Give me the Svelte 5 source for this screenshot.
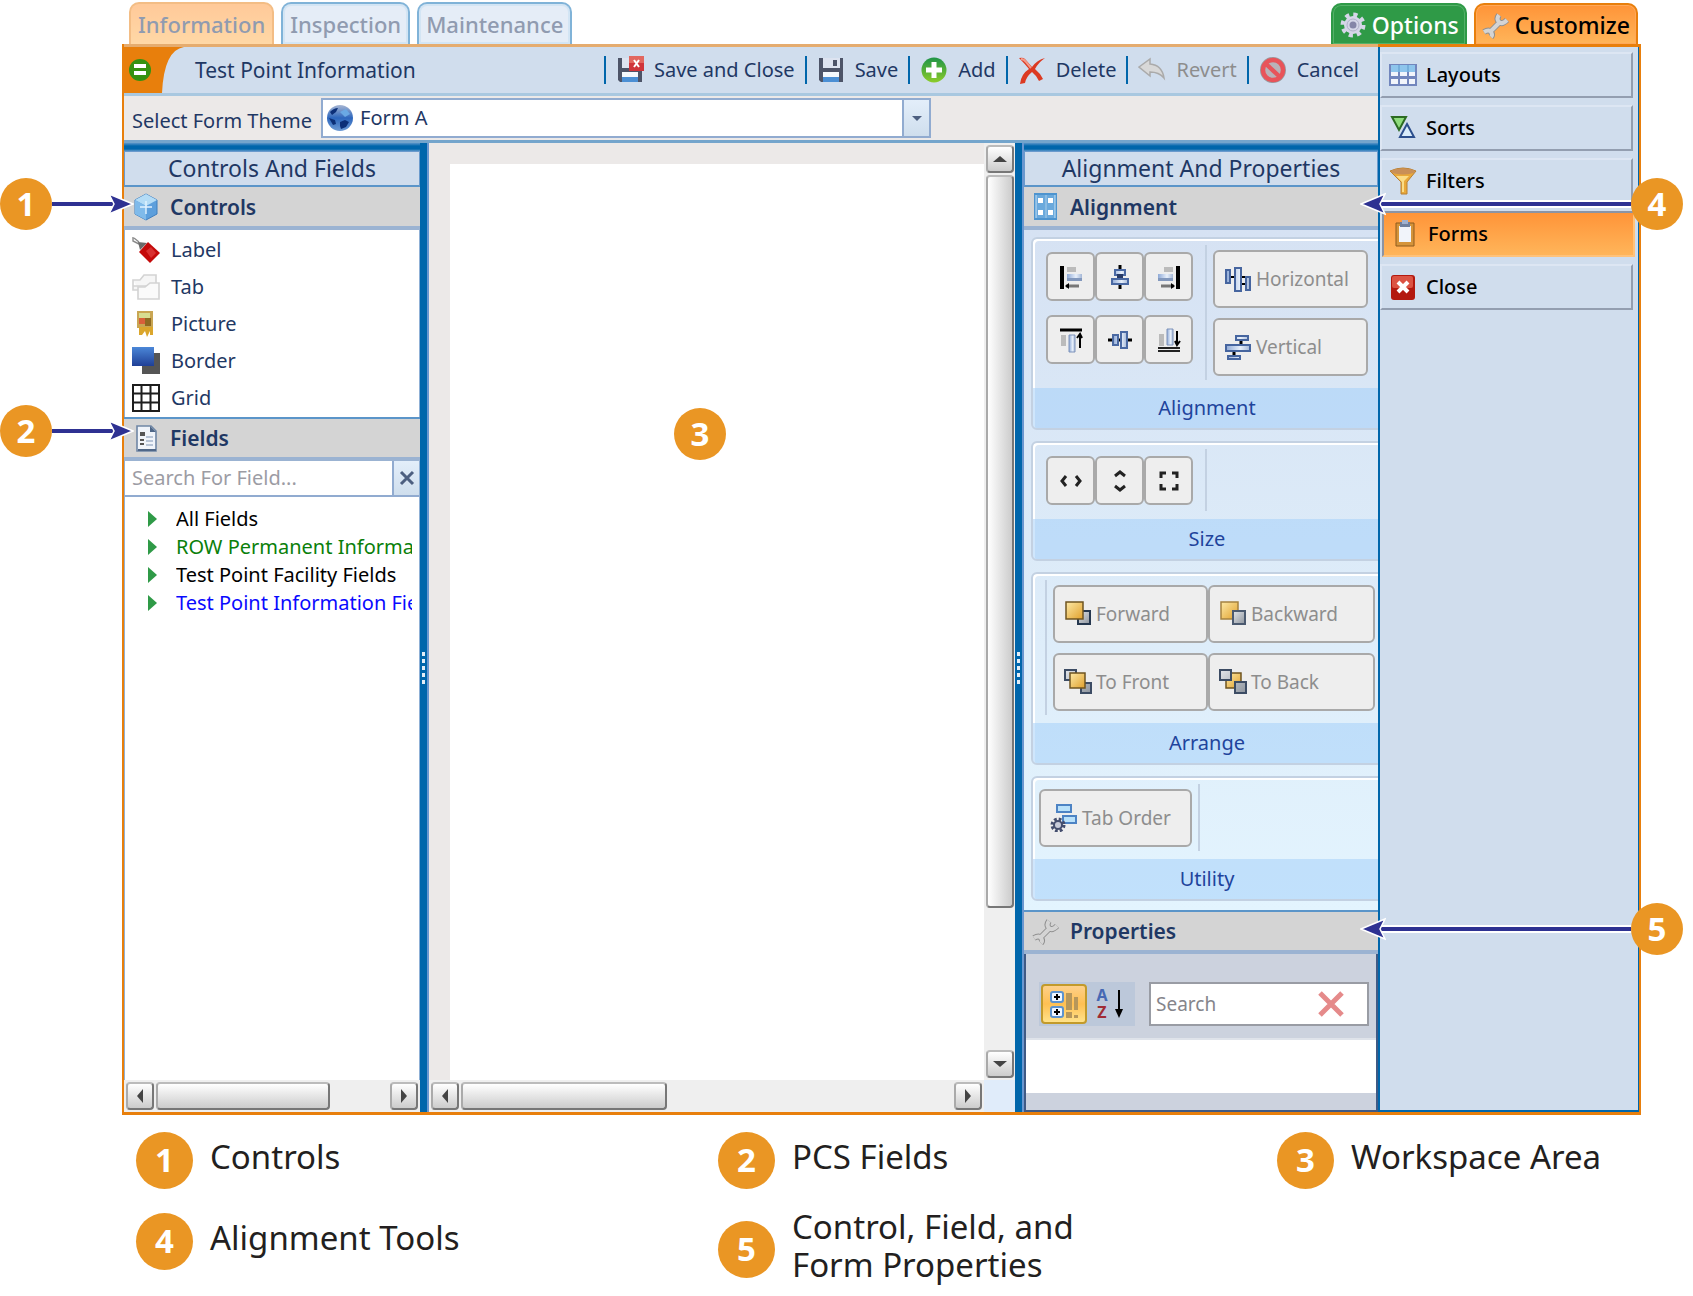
<script>
  const tabs = [
    { label: 'Information', active: true },
    { label: 'Inspection', active: false },
    { label: 'Maintenance', active: false },
  ];

  const actions = [
    { label: 'Save and Close', icon: 'save-close' },
    { label: 'Save', icon: 'save' },
    { label: 'Add', icon: 'add' },
    { label: 'Delete', icon: 'delete' },
    { label: 'Revert', icon: 'revert', disabled: true },
    { label: 'Cancel', icon: 'cancel' },
  ];

  const controls = [
    { label: 'Label', icon: 'label' },
    { label: 'Tab', icon: 'tab' },
    { label: 'Picture', icon: 'picture' },
    { label: 'Border', icon: 'border' },
    { label: 'Grid', icon: 'grid' },
  ];

  const fields = [
    { label: 'All Fields', color: '#000000' },
    { label: 'ROW Permanent Information', color: '#0a800a' },
    { label: 'Test Point Facility Fields', color: '#000000' },
    { label: 'Test Point Information Fields', color: '#0a0aff' },
  ];

  const alignButtons = [
    ['align-left', 'Align left'],
    ['align-center', 'Align center'],
    ['align-right', 'Align right'],
    ['align-top', 'Align top'],
    ['align-middle', 'Align middle'],
    ['align-bottom', 'Align bottom'],
  ];

  const sizeButtons = [
    ['same-width', 'Same width'],
    ['same-height', 'Same height'],
    ['same-size', 'Same size'],
  ];

  const menu = [
    { label: 'Layouts', icon: 'layouts' },
    { label: 'Sorts', icon: 'sorts' },
    { label: 'Filters', icon: 'filters' },
    { label: 'Forms', icon: 'forms' },
    { label: 'Close', icon: 'close' },
  ];

  const legend = [
    'Controls',
    'PCS Fields',
    'Workspace Area',
    'Alignment Tools',
    'Control, Field, and\nForm Properties',
  ];

  let selected = $state('Forms');
</script>

{#snippet icon(name)}
  <svg class="icon" viewBox="0 0 28 28" aria-hidden="true">
    {#if name === 'save' || name === 'save-close'}
      <path d="M2 2h24v24H4l-2-2z" fill="#4d5468" />
      <path d="M6 2h17v10H6z" fill="#dde3f0" />
      <path d="M16 4h4v6h-4z" fill="#4d5468" />
      <path d="M6 16h16v10H6z" fill="#f4f8fc" />
      <path d="M6 21h16v5H6z" fill="#4b8fd4" />
      {#if name === 'save-close'}
        <path d="M13 0h15v15H13z" fill="#d0343a" />
        <path d="M13 0h15v7H13z" fill="#e2675f" />
        <path d="M18 4l5 7M23 4l-5 7" stroke="#fff" stroke-width="2" />
      {/if}
    {:else if name === 'add'}
      <circle cx="14" cy="14" r="12.5" fill="url(#green)" />
      <path d="M14 6v16M6 14h16" stroke="#fff" stroke-width="5" />
    {:else if name === 'delete'}
      <path d="M1 2q4-1 6 1l7 8q5-7 13-9q-7 5-10 11q5 4 8 10l-4 2q-3-6-7-9q-6 5-7 11l-5 1q1-10 9-15q-4-5-10-11z" fill="#dc3a22" />
      <path d="M3 3q3 0 5 3l5 6" stroke="#f39a8a" stroke-width="2" fill="none" />
    {:else if name === 'revert'}
      <path d="M1 11L12 3v5q12 1 14 14q-5-6-14-6v4z" fill="#d8d8d8" stroke="#aaa" stroke-width="1.5" />
    {:else if name === 'cancel'}
      <circle cx="14" cy="14" r="13" fill="#9a9a9f" />
      <circle cx="14" cy="14" r="10" fill="#b9b2b8" stroke="#e8545a" stroke-width="4.4" />
      <path d="M7 8l14 13" stroke="#e8545a" stroke-width="4.4" />
    {:else if name === 'globe'}
      <circle cx="14" cy="14" r="13" fill="url(#globe)" />
      <path d="M4 8q4-4 8-4l-2 4-4 3zM14 18l5-2 4 2-3 5-5 2-1-3zM3 14l6 2 1 4-3 1z" fill="#0c2f78" />
      <path d="M14 8l6-3 4 5-5 3z" fill="#6aa9e4" />
    {:else if name === 'cube'}
      <path d="M14 1l11 6v14l-11 6-11-6V7z" fill="#5d9fdc" stroke="#3f7fbf" />
      <path d="M14 1l11 6-11 6L3 7z" fill="#b4dcf6" />
      <path d="M3 7l11 6v14L3 21z" fill="#7fbaea" />
      <path d="M14 8v13M8 14h12" stroke="#e3f4ff" stroke-width="1.4" />
    {:else if name === 'label'}
      <path d="M1 1v4l6 3M2 2l5 4" stroke="#8a8a8a" fill="none" stroke-width="1.4" />
      <path d="M6 6l9 1-7 7z" fill="#6b6b6b" />
      <path d="M16 6l12 11-10 10L7 16z" fill="#c40a0a" />
      <path d="M14 15l5-4 5 6-5 5z" fill="#d93030" />
    {:else if name === 'tab'}
      <path d="M1 7h7l4-5h12v11H1zM1 7v10h6" fill="#f6f6f6" stroke="#d3d3d3" stroke-width="1.6" />
      <path d="M6 14h7l5-4h9v16H6z" fill="#fafafa" stroke="#d3d3d3" stroke-width="1.6" />
    {:else if name === 'picture'}
      <path d="M5 1h16v17H5z" fill="#c9a653" />
      <path d="M7 3h11v6H7z" fill="#d7dd92" />
      <path d="M7 8h6v6H7z" fill="#d9603a" />
      <path d="M13 8h6v8h-6z" fill="#8f6a22" />
      <path d="M7 17h14v8h-3v-4l-3 6-2-6-3 4H7z" fill="#dba62c" />
    {:else if name === 'border'}
      <path d="M10 6h18v21H10z" fill="#555" />
      <path d="M0 0h22v19H0z" fill="url(#blue)" />
    {:else if name === 'grid'}
      <path d="M1 1h26v26H1zM9.500 1v26M18.500 1v26M1 9.500h26M1 18.500h26" fill="#fff" stroke="#1d1d1d" stroke-width="2" />
    {:else if name === 'document'}
      <path d="M5 2h14l5 5v20H5z" fill="#f0f4fa" stroke="#6f86a5" stroke-width="1.6" />
      <path d="M18 2v6h6zM6 25h18v2H6z" fill="#4f6788" />
      <path d="M8 8h5v4H8zM8 15h4v2H8zM8 19h4v2H8z" fill="#555" />
      <path d="M14 13h7M14 17h7M14 21h7" stroke="#a4b4cb" stroke-width="1.6" />
    {:else if name === 'align-grid'}
      <path d="M2 0h23v27H2z" fill="#4d94cf" />
      <path d="M4 2h9v23H4zM15 2h8v23h-8z" fill="#6aa9dc" />
      <path d="M6 5h5v5H6zM16 5h5v5h-5zM6 17h5v5H6zM16 17h5v5h-5z" fill="#fff" />
      <path d="M4 2v23M14 2v23M23 2v23" stroke="#c7e2f6" stroke-width="1" />
    {:else if name === 'wrench'}
      <g fill="none" stroke="#8f8f8f" stroke-width="6">
        <path d="M17 4q-3 4 0 7t8-2M2 21q5-3 7 0t0 5M9 20l9-9" />
      </g>
      <g fill="none" stroke="#d4d4d4" stroke-width="4">
        <path d="M17 4q-3 4 0 7t8-2M2 21q5-3 7 0t0 5M9 20l9-9" />
      </g>
    {:else if name === 'gear'}
      <circle cx="14" cy="14" r="10" fill="none" stroke="#d5d6e8" stroke-width="5" stroke-dasharray="4 3.850" />
      <circle cx="14" cy="14" r="9" fill="#d5d6e8" />
      <circle cx="14" cy="14" r="3.500" fill="#8585a8" />
      <circle cx="14" cy="14" r="6" fill="none" stroke="#b0b1ca" />
    {:else if name === 'layouts'}
      <path d="M0 3h28v22H0z" fill="#7286bd" />
      <path d="M2 4h24v7H2z" fill="#8ec5ec" />
      <path d="M2 11h7v4H2zM11 11h7v4h-7zM20 11h6v4h-6zM2 18h7v5H2zM11 18h7v5h-7zM20 18h6v5h-6z" fill="#f2f5fb" />
      <path d="M10 4v7M19 4v7" stroke="#6fa8d8" stroke-width="1.6" />
    {:else if name === 'sorts'}
      <path d="M3 3h14l-7 13z" fill="#8fdc7d" stroke="#2c6b22" stroke-width="2" />
      <path d="M18 10l7 13H11z" fill="#d9ecfb" stroke="#2c4f8d" stroke-width="2" />
    {:else if name === 'filters'}
      <path d="M1 4q13-6 26 0L18 15v12h-6V15z" fill="#e9a93a" stroke="#b98033" />
      <ellipse cx="14" cy="4.500" rx="12" ry="3" fill="#c98f57" />
      <path d="M7 9l6 6v10h2V14l5-5z" fill="#fbdc86" />
    {:else if name === 'forms'}
      <path d="M5 3h18v23H5z" fill="#d5943a" stroke="#8f5a1c" />
      <path d="M8 6h12v16H8z" fill="#f1f4fa" />
      <path d="M9 2h10v5H9z" fill="#6f7f9d" />
      <path d="M11 0h6v4h-6z" fill="#9fb0cf" />
    {:else if name === 'close'}
      <rect x="2" y="2" width="24" height="25" rx="3" fill="#b3190f" />
      <rect x="3" y="3" width="21" height="12" rx="2" fill="#dc5343" />
      <path d="M9 9l10 10M19 9L9 19" stroke="#fff" stroke-width="4" />
    {:else if name === 'align-left'}
      <path d="M3 3h4v23H3z" fill="#000" />
      <path d="M10 4h9v5h-9z" fill="#bbb" />
      <path d="M10 11h15v7H10z" fill="url(#steel)" />
      <path d="M10 15h15v3H10z" fill="#8298bd" />
      <path d="M9 23h13" stroke="#777" stroke-width="3" />
      <path d="M8 23l4-3v6z" fill="#000" />
    {:else if name === 'align-right'}
      <path d="M21 3h4v23h-4z" fill="#000" />
      <path d="M9 4h9v5H9z" fill="#bbb" />
      <path d="M3 11h15v7H3z" fill="url(#steel)" />
      <path d="M3 15h15v3H3z" fill="#8298bd" />
      <path d="M6 23h13" stroke="#777" stroke-width="3" />
      <path d="M20 23l-4-3v6z" fill="#000" />
    {:else if name === 'align-center'}
      <path d="M14 2v24" stroke="#000" stroke-width="3" />
      <path d="M9 7h10v5H9zM6 16h16v5H6z" fill="url(#steel)" stroke="#4a69a3" stroke-width="2" />
      <path d="M11 11h6v4h-6z" fill="#273a66" />
    {:else if name === 'align-top'}
      <path d="M3 4h22" stroke="#000" stroke-width="3" />
      <path d="M4 9h5v11H4z" fill="#bbb" />
      <path d="M12 9h6v17h-6z" fill="url(#steel)" stroke="#7d92ba" />
      <path d="M23 9v13M20 12l3-4 2 4" stroke="#000" stroke-width="2" fill="none" />
    {:else if name === 'align-middle'}
      <path d="M2 14h24" stroke="#000" stroke-width="3" />
      <path d="M7 9h5v10H7zM15 6h6v16h-6z" fill="url(#steel)" stroke="#4a69a3" stroke-width="2" />
    {:else if name === 'align-bottom'}
      <path d="M3 25h22M3 22h22" stroke="#222" stroke-width="2" />
      <path d="M4 8h5v12H4z" fill="#bbb" />
      <path d="M12 3h6v16h-6z" fill="url(#steel)" stroke="#7d92ba" />
      <path d="M22 5v14M20 15l2 4 3-4" stroke="#000" stroke-width="2" fill="none" />
    {:else if name === 'horizontal'}
      <path d="M4 12h20M17 19h8" stroke="#000" stroke-width="2" />
      <path d="M2 5h4v13H2zM11 3h6v23h-6zM22 12h4v13h-4z" fill="url(#steel)" stroke="#46659f" stroke-width="2" />
    {:else if name === 'vertical'}
      <path d="M17 6v8M10 16v8" stroke="#000" stroke-width="3" />
      <path d="M12 3h12v4H12zM2 12h24v6H2zM4 23h12v3H4z" fill="url(#steel)" stroke="#46659f" stroke-width="2" />
    {:else if name === 'same-width'}
      <path d="M9 9l-4 5 4 5M19 9l4 5-4 5" stroke="#222" stroke-width="3" fill="none" />
    {:else if name === 'same-height'}
      <path d="M9 9l5-4 5 4M9 19l5 4 5-4" stroke="#222" stroke-width="3" fill="none" />
    {:else if name === 'same-size'}
      <path d="M6 11V6h5M17 6h5v5M22 17v5h-5M11 22H6v-5" stroke="#222" stroke-width="3" fill="none" />
    {:else if name === 'forward'}
      <path d="M14 11h12v13H14z" fill="url(#silver)" stroke="#26384f" stroke-width="2" />
      <path d="M2 2h17v17H2z" fill="url(#gold)" stroke="#6f5420" stroke-width="1.500" />
    {:else if name === 'backward'}
      <path d="M2 2h17v17H2z" fill="url(#gold)" stroke="#a58240" stroke-width="1.500" />
      <path d="M14 11h12v13H14z" fill="url(#silver)" stroke="#4b5a70" stroke-width="2" />
    {:else if name === 'to-front'}
      <path d="M1 2h11v10H1zM17 15h10v10H17z" fill="url(#silver)" stroke="#3c4c64" stroke-width="2" />
      <path d="M6 5h15v15H6z" fill="url(#gold)" stroke="#6f5420" stroke-width="1.500" />
    {:else if name === 'to-back'}
      <path d="M7 5h15v15H7z" fill="url(#gold)" stroke="#6f5420" stroke-width="1.500" />
      <path d="M1 2h11v10H1zM16 14h11v11H16z" fill="url(#silver)" stroke="#3c4c64" stroke-width="2" />
    {:else if name === 'tab-order'}
      <path d="M7 1h14v7H7zM13 12h13v7H13z" fill="#b9e1fa" stroke="#4d83c4" stroke-width="2" />
      <circle cx="8" cy="21" r="5.500" fill="none" stroke="#444e6e" stroke-width="4" stroke-dasharray="2.500 1.820" />
      <circle cx="8" cy="21" r="4" fill="#c7cbd9" stroke="#444e6e" stroke-width="2" />
    {:else if name === 'categorized'}
      <rect x="1" y="2" width="12" height="10" rx="2" fill="#eef6ff" stroke="#5c93cf" stroke-width="2" />
      <rect x="1" y="17" width="12" height="10" rx="2" fill="#eef6ff" stroke="#5c93cf" stroke-width="2" />
      <path d="M7 4v6M4 7h6M7 19v6M4 22h6" stroke="#000" stroke-width="2" />
      <path d="M16 3h6v17h-6zM24 7h4v13h-4zM16 22h6v6h-6zM24 25h4v3h-4z" fill="#b7975a" />
    {/if}
  </svg>
{/snippet}

{#snippet arrow(dir)}
  <button class="scroll-button" aria-label={`Scroll ${dir}`}>
    <svg class="arrow-{dir}" width="14" height="14" viewBox="0 0 14 14" aria-hidden="true">
      <path d="M7 4l7 6H0z" fill="#444" />
    </svg>
  </button>
{/snippet}

{#snippet callout(n, side)}
  <span class="callout {side}">
    <span class="dot">{n}</span>
    <svg class="pointer" preserveAspectRatio="none" viewBox="0 0 10 24" aria-hidden="true">
      <path d="M0 12h10" stroke="#fff" stroke-width="8" />
      <path d="M0 12h10" stroke="#2e3192" stroke-width="4" />
    </svg>
    <svg class="head" width="26" height="24" viewBox="0 0 26 24" aria-hidden="true">
      <path d="M1 2l24 10L1 22l5-10z" fill="#2e3192" stroke="#fff" stroke-width="1.500" />
    </svg>
  </span>
{/snippet}

{#snippet splitter()}
  <div class="splitter">
    <span></span><span></span><span></span><span></span><span></span>
  </div>
{/snippet}

{#snippet ribbonButton(name, label)}
  <button class="ribbon-button" disabled>
    {@render icon(name)}
    <span>{label}</span>
  </button>
{/snippet}

<svg class="defs" aria-hidden="true">
  <defs>
    <linearGradient id="green" x2="0" y2="1">
      <stop offset="0" stop-color="#1f9447" /><stop offset="1" stop-color="#8ccc2a" />
    </linearGradient>
    <linearGradient id="globe" x2="0" y2="1">
      <stop offset="0" stop-color="#a7b6d3" /><stop offset=".5" stop-color="#2c66bd" /><stop offset="1" stop-color="#6d9ad4" />
    </linearGradient>
    <linearGradient id="blue" x2="0" y2="1">
      <stop offset="0" stop-color="#4b87d8" /><stop offset="1" stop-color="#1f3f96" />
    </linearGradient>
    <linearGradient id="steel">
      <stop offset="0" stop-color="#8ea9d6" /><stop offset=".6" stop-color="#e8f0fb" /><stop offset="1" stop-color="#a3b6d6" />
    </linearGradient>
    <linearGradient id="silver" x2="1" y2="1">
      <stop offset="0" stop-color="#e3e6ea" /><stop offset="1" stop-color="#8d949d" />
    </linearGradient>
    <linearGradient id="gold" x2="1" y2="1">
      <stop offset="0" stop-color="#fde9a6" /><stop offset="1" stop-color="#e0a02c" />
    </linearGradient>
  </defs>
</svg>

<main>
  <div class="screen">
    <nav class="tabs">
      {#each tabs as tab}
        <button class="tab" class:active={tab.active}>{tab.label}</button>
      {/each}
      <button class="tab options">{@render icon('gear')}Options</button>
      <button class="tab customize">{@render icon('wrench')}Customize</button>
    </nav>

    <div class="frame">
      <div class="content">
        <header class="toolbar">
          <svg class="corner" width="60" height="46" viewBox="0 0 60 46" aria-hidden="true">
            <path d="M0 0h60Q40 3 38 46H0z" fill="#e87f0c" />
            <circle cx="16" cy="23" r="11" fill="#35910f" />
            <path d="M10 19h12M10 26h12" stroke="#fff" stroke-width="4" />
          </svg>
          <h1>Test Point Information</h1>
          <div class="actions">
            {#each actions as action}
              <button class="action" disabled={action.disabled}>
                {@render icon(action.icon)}
                {action.label}
              </button>
            {/each}
          </div>
        </header>

        <div class="theme-row">
          <label for="theme">Select Form Theme</label>
          <div class="select-box">
            {@render icon('globe')}
            <select id="theme">
              <option>Form A</option>
            </select>
            <span class="select-arrow"></span>
          </div>
        </div>

        <div class="body">
          <section class="panel left">
            <h2>Controls And Fields</h2>
            <h3>
              {@render icon('cube')}Controls
              {@render callout(1, 'from-left')}
            </h3>
            <ul class="controls">
              {#each controls as control}
                <li>{@render icon(control.icon)}{control.label}</li>
              {/each}
            </ul>
            <h3 class="upper-line">
              {@render icon('document')}Fields
              {@render callout(2, 'from-left')}
            </h3>
            <div class="field-search">
              <input type="text" placeholder="Search For Field..." aria-label="Search For Field" />
              <button aria-label="Clear search">
                <svg width="16" height="16" viewBox="0 0 16 16" aria-hidden="true">
                  <path d="M2 2l12 12M14 2L2 14" stroke="#4d5f80" stroke-width="3" />
                </svg>
              </button>
            </div>
            <ul class="tree">
              {#each fields as field}
                <li style="color: {field.color}"><span>{field.label}</span></li>
              {/each}
            </ul>
            <div class="scrollbar horizontal">
              {@render arrow('left')}
              <div class="track"><div class="thumb" style="width: 75%"></div></div>
              {@render arrow('right')}
            </div>
          </section>

          {@render splitter()}

          <section class="workspace">
            <div class="canvas"><span class="dot">3</span></div>
            <div class="scrollbar vertical">
              {@render arrow('up')}
              <div class="track"><div class="thumb" style="height: 84%"></div></div>
              {@render arrow('down')}
            </div>
            <div class="scrollbar horizontal">
              {@render arrow('left')}
              <div class="track"><div class="thumb" style="width: 42%"></div></div>
              {@render arrow('right')}
            </div>
            <div class="scroll-corner"></div>
          </section>

          {@render splitter()}

          <section class="panel right">
            <h2>Alignment And Properties</h2>
            <h3>
              {@render icon('align-grid')}Alignment
              {@render callout(4, 'from-right')}
            </h3>
            <div class="ribbon">
              <div class="group">
                <div class="tools">
                  <div class="small-buttons">
                    {#each alignButtons as [name, label]}
                      <button class="small-button" aria-label={label}>{@render icon(name)}</button>
                    {/each}
                  </div>
                  <i></i>
                  <div class="stack">
                    {@render ribbonButton('horizontal', 'Horizontal')}
                    {@render ribbonButton('vertical', 'Vertical')}
                  </div>
                </div>
                <h4>Alignment</h4>
              </div>
              <div class="group">
                <div class="tools short">
                  <div class="small-buttons">
                    {#each sizeButtons as [name, label]}
                      <button class="small-button" aria-label={label}>{@render icon(name)}</button>
                    {/each}
                  </div>
                  <i></i>
                </div>
                <h4>Size</h4>
              </div>
              <div class="group">
                <div class="tools">
                  <i></i>
                  <div class="arrange">
                    {@render ribbonButton('forward', 'Forward')}
                    {@render ribbonButton('backward', 'Backward')}
                    {@render ribbonButton('to-front', 'To Front')}
                    {@render ribbonButton('to-back', 'To Back')}
                  </div>
                </div>
                <h4>Arrange</h4>
              </div>
              <div class="group">
                <div class="tools utility">
                  {@render ribbonButton('tab-order', 'Tab Order')}
                  <i></i>
                </div>
                <h4>Utility</h4>
              </div>
            </div>
            <h3 class="upper-line">
              {@render icon('wrench')}Properties
              {@render callout(5, 'from-right')}
            </h3>
            <div class="properties">
              <div class="property-tools">
                <div class="toggles">
                  <button class="on" aria-label="Categorized">{@render icon('categorized')}</button>
                  <button aria-label="Sort alphabetically">
                    <span class="az"><b>A</b><b>Z</b></span>
                    <svg width="10" height="30" viewBox="0 0 10 30" aria-hidden="true">
                      <path d="M5 1v20" stroke="#000" stroke-width="2" />
                      <path d="M1 20h8l-4 9z" fill="#000" />
                    </svg>
                  </button>
                </div>
                <div class="property-search">
                  <input type="text" placeholder="Search" aria-label="Search properties" />
                  <button aria-label="Clear">
                    <svg width="28" height="26" viewBox="0 0 28 26" aria-hidden="true">
                      <path d="M3 2l22 22M25 2L3 24" stroke="#e58a8a" stroke-width="5" />
                    </svg>
                  </button>
                </div>
              </div>
              <div class="property-list"></div>
            </div>
          </section>
        </div>
      </div>

      <aside>
        {#each menu as item}
          <button class:selected={selected === item.label} onclick={() => (selected = item.label)}>
            {@render icon(item.icon)}
            {item.label}
          </button>
        {/each}
      </aside>
    </div>
  </div>

  <ol class="legend">
    {#each legend as text, i}
      <li><span class="dot">{i + 1}</span><span class="legend-text">{text}</span></li>
    {/each}
  </ol>
</main>

<style>
  :global(body) {
    background: #fff;
  }

  main {
    font-family: 'Noto Sans', 'Open Sans', sans-serif;
    font-size: 20px;
    line-height: 28px;
    color: #1f3864;
  }

  main :global(*) {
    box-sizing: border-box;
  }

  h1, h2, h3, h4, ul, ol {
    margin: 0;
    padding: 0;
    list-style: none;
    font-weight: 400;
  }

  button, input, select {
    margin: 0;
    padding: 0;
    border: 0;
    background: none;
    font: inherit;
    color: inherit;
    border-radius: 0;
  }

  .defs {
    position: absolute;
    width: 0;
    height: 0;
  }

  .icon {
    flex: none;
    width: 28px;
    height: 28px;
  }

  .screen {
    padding: 2px 52px 0 122px;
  }

  /* tabs */
  .tabs {
    display: flex;
    align-items: flex-end;
    gap: 7px;
    padding: 0 3px 0 7px;
  }

  .tab {
    height: 42px;
    padding: 0 7px;
    border: 2px solid #80b3d8;
    border-bottom: 0;
    border-radius: 10px 10px 0 0;
    background: #e5edf7;
    box-shadow: inset 0 0 0 2px #d3e5f4;
    font-size: 22px;
    font-weight: 500;
    color: #909bb0;
    white-space: nowrap;
  }

  .tab.active {
    border-color: #f3bd85;
    background: linear-gradient(#ffc999, #ffd8a6);
    box-shadow: none;
  }

  .options,
  .customize {
    display: flex;
    align-items: center;
    gap: 5px;
    height: 41px;
    padding: 0 6px;
    font-size: 23px;
  }

  .options {
    margin-left: auto;
    border-color: #2f9a47;
    background: #2f9a47;
    box-shadow: inset 0 0 0 1px #55b169;
    color: #fff;
  }

  .customize {
    border-color: #e87f0c;
    background: linear-gradient(#ff9438, #ffb55a);
    box-shadow: inset 0 0 0 1px #ffa85a;
    color: #000;
  }

  /* frame */
  .frame {
    display: flex;
    border: solid #e87f0c;
    border-width: 0 2px 3px;
  }

  .content {
    flex: 1;
    min-width: 0;
    display: flex;
    flex-direction: column;
    border-top: 3px solid #e5ac6f;
  }

  .toolbar {
    display: flex;
    align-items: center;
    height: 49px;
    background: #d0dded;
    border-bottom: 3px solid #a9c8e0;
  }

  .corner {
    flex: none;
  }

  h1 {
    margin-left: 11px;
    font-size: 21px;
    white-space: nowrap;
  }

  .actions {
    display: flex;
    margin-left: auto;
    padding-right: 9px;
  }

  .action {
    display: flex;
    align-items: center;
    gap: 10px;
    height: 28px;
    padding: 0 10px;
    border-left: 2px solid #0066ab;
    font-size: 20px;
    white-space: nowrap;
  }

  .action:disabled {
    color: #8d8d8d;
  }

  .theme-row {
    display: flex;
    align-items: center;
    gap: 9px;
    height: 47px;
    padding-left: 8px;
    background: #ece9e8;
    border-bottom: 3px solid #74a5cc;
  }

  .theme-row label {
    padding-top: 6px;
    white-space: nowrap;
  }

  .select-box {
    display: flex;
    align-items: center;
    width: 610px;
    height: 40px;
    padding-left: 3px;
    border: 2px solid #91abd0;
    background: #fff;
  }

  select {
    flex: 1;
    height: 100%;
    padding-left: 6px;
    appearance: none;
    font-size: 20px;
  }

  .select-arrow {
    display: grid;
    place-items: center;
    width: 27px;
    height: 100%;
    border-left: 2px solid #91abd0;
    background: linear-gradient(#e3eefa, #cfdeed);
  }

  .select-arrow::after {
    content: '';
    border: 5px solid transparent;
    border-top-color: #4d5f80;
    border-bottom: 0;
  }

  .body {
    flex: 1;
    display: flex;
    background: #0066ab;
  }

  /* panels */
  .panel {
    display: flex;
    flex-direction: column;
    padding-top: 8px;
    background: linear-gradient(#5b95c9, #0066ab 3px, #0066ab 6px, #5b95c9 8px);
  }

  .left {
    width: 296px;
  }

  .right {
    width: 354px;
  }

  h2 {
    height: 36px;
    border: 1px solid #6a9acd;
    border-bottom: 2px solid #5b95c9;
    background: #d0dded;
    font-size: 23px;
    line-height: 33px;
    text-align: center;
    white-space: nowrap;
  }

  h3 {
    position: relative;
    display: flex;
    align-items: center;
    gap: 10px;
    height: 43px;
    padding-left: 8px;
    border-bottom: 4px solid #9bb3d2;
    background: #d4d4d4;
    font-size: 21px;
    font-weight: 600;
  }

  .upper-line {
    height: 44px;
    border-top: 2px solid #5b95c9;
  }

  .controls {
    padding: 1px 7px 0;
    height: 187px;
    background: #fff;
  }

  .controls li {
    display: flex;
    align-items: center;
    gap: 11px;
    height: 37px;
  }

  .left ul,
  .field-search {
    border: solid #8fb0d6;
    border-width: 0 1px;
  }

  .field-search {
    display: flex;
    height: 36px;
    border-bottom: 2px solid #91abd0;
    background: #fff;
  }

  .field-search input {
    flex: 1;
    min-width: 0;
    padding-left: 7px;
    outline: 0;
  }

  input::placeholder {
    color: #9c9ca4;
    opacity: 1;
  }

  .field-search button {
    display: grid;
    place-items: center;
    width: 27px;
    border-left: 2px solid #91abd0;
    background: linear-gradient(#e3eefa, #cfdeed);
  }

  .tree {
    flex: 1;
    padding: 8px 7px 0 23px;
    background: #fff;
  }

  .tree li {
    display: flex;
    align-items: center;
    height: 28px;
  }

  .tree li::before {
    content: '';
    margin-right: 19px;
    border: 8px solid transparent;
    border-left: 9px solid #2f9a47;
    border-right: 0;
  }

  .tree span {
    overflow: hidden;
    white-space: nowrap;
  }

  .splitter {
    display: flex;
    flex-direction: column;
    align-items: center;
    justify-content: center;
    gap: 3px;
    width: 9px;
    padding-top: 80px;
    border-right: 2px solid #6a97d0;
    background: #0066ab;
  }

  .splitter span {
    width: 3px;
    height: 4px;
    background: #e3eef7;
  }

  /* scrollbars */
  .scrollbar {
    display: flex;
    gap: 2px;
    padding: 2px;
    background: #efefef;
  }

  .horizontal {
    height: 32px;
  }

  .vertical {
    flex-direction: column;
    width: 31px;
  }

  .scroll-button,
  .thumb {
    border: 2px solid #777;
    border-top-color: #bbb;
    border-left-color: #aaa;
    border-radius: 4px;
    background: linear-gradient(#fff, #ccc);
  }

  .scroll-button {
    display: grid;
    place-items: center;
    flex: none;
    width: 28px;
    height: 28px;
  }

  .track {
    flex: 1;
    min-height: 0;
  }

  .horizontal .thumb {
    height: 28px;
  }

  .vertical .thumb {
    width: 28px;
    background: linear-gradient(90deg, #fff, #ccc);
  }

  .arrow-left {
    transform: rotate(-90deg);
  }

  .arrow-right {
    transform: rotate(90deg);
  }

  .arrow-down {
    transform: rotate(180deg);
  }

  .workspace {
    flex: 1;
    min-width: 0;
    display: grid;
    grid-template-columns: 1fr 31px;
    grid-template-rows: 1fr 32px;
  }

  .canvas {
    display: grid;
    justify-content: center;
    align-content: start;
    padding-top: 244px;
    padding-right: 34px;
    border: solid #ece9e8;
    border-width: 21px 0 0 21px;
    background: #fff;
  }

  .scroll-corner {
    background: #e0ecfa;
  }

  /* ribbon */
  .ribbon {
    display: flex;
    flex-direction: column;
    gap: 11px;
    padding: 7px 0 9px 7px;
    overflow: hidden;
    background: linear-gradient(#d6e2f3, #e3f4fe);
  }

  .group {
    margin-right: -5px;
    border: 2px solid #c3d1e2;
    border-radius: 6px;
    box-shadow: inset 2px 2px 0 #fff;
  }

  .tools {
    display: flex;
    align-items: flex-start;
    gap: 6px;
    height: 149px;
    padding: 6px 0 0 12px;
  }

  .tools i {
    align-self: stretch;
    width: 2px;
    margin-bottom: 8px;
    background: #c3d1e2;
  }

  .short {
    height: 76px;
  }

  .utility {
    height: 81px;
    padding-left: 6px;
  }

  .utility .ribbon-button {
    margin-top: 5px;
    width: 153px;
  }

  .small-buttons {
    display: grid;
    grid-template-columns: repeat(3, 49px);
    row-gap: 14px;
    padding: 7px 6px 0 1px;
  }

  .small-button {
    display: grid;
    place-items: center;
    height: 49px;
    border: 2px solid #a9a9a9;
    border-radius: 6px;
    background: #eee;
  }

  .stack {
    display: grid;
    width: 155px;
    gap: 10px;
    padding-top: 5px;
  }

  .arrange {
    display: grid;
    grid-template-columns: 155px 167px;
    gap: 10px 0;
    padding-top: 5px;
  }

  .ribbon-button {
    display: flex;
    align-items: center;
    gap: 4px;
    height: 58px;
    padding-left: 9px;
    border: 2px solid #a9a9a9;
    border-radius: 6px;
    background: #eee;
    font-size: 19px;
    color: #8d8d8d;
    white-space: nowrap;
  }

  h4 {
    height: 40px;
    border-radius: 0 0 4px 4px;
    background: rgb(160 205 250 / 50%);
    font-size: 20px;
    line-height: 40px;
    text-align: center;
    color: #1f449c;
  }

  /* properties */
  .properties {
    flex: 1;
    display: flex;
    flex-direction: column;
    padding-bottom: 17px;
    border: 2px solid #3f5a85;
    border-top: 0;
    background: #ccd2de;
  }

  .property-tools {
    display: flex;
    gap: 14px;
    padding: 28px 7px 12px 13px;
    border-bottom: 2px solid #dfe3ea;
  }

  .toggles {
    display: flex;
    height: 44px;
    padding: 2px;
    background: #bcc8da;
  }

  .toggles button {
    display: flex;
    align-items: center;
    justify-content: center;
    gap: 6px;
    width: 46px;
  }

  .toggles .on {
    border: 2px solid #c29a2b;
    border-radius: 4px;
    background: linear-gradient(#fdd08a, #ffc053 50%, #ffe28a);
  }

  .az {
    display: grid;
    font-size: 16px;
    line-height: 17px;
    color: #4668b4;
  }

  .az b + b {
    color: #a02c35;
  }

  .property-search {
    flex: 1;
    display: flex;
    align-items: center;
    min-width: 0;
    height: 44px;
    padding: 0 22px 0 5px;
    border: 2px solid #999ca4;
    background: #fff;
  }

  .property-search input {
    flex: 1;
    min-width: 0;
    outline: 0;
    font-size: 19px;
  }

  .property-search input::placeholder {
    color: #85858b;
  }

  .property-search button {
    display: flex;
  }

  .property-list {
    flex: 1;
    min-height: 53px;
    background: #fff;
  }

  /* side menu */
  aside {
    position: relative;
    flex: none;
    display: flex;
    flex-direction: column;
    gap: 7px;
    width: 261px;
    margin-top: 3px;
    padding: 5px 5px 0 0;
    border: solid #0066ab;
    border-width: 0 1px 2px 2px;
    background: #d0dded;
  }

  aside::before {
    content: '';
    position: absolute;
    inset: -3px -1px auto -2px;
    height: 3px;
    background: #e87f0c;
  }

  aside button {
    display: flex;
    align-items: center;
    gap: 9px;
    height: 46px;
    padding-left: 7px;
    border: 2px solid;
    border-color: #dde6f3 #939eb0 #939eb0 #dde6f3;
    font-weight: 500;
    font-size: 20px;
    color: #000;
  }

  aside .selected {
    margin: 0 -2px 0 2px;
    border-color: #8c94a4 #ffc27a #ffc27a #8c94a4;
    background: linear-gradient(#ff9438, #ffb55a);
  }

  /* callouts */
  .dot {
    display: grid;
    place-items: center;
    flex: none;
    width: 52px;
    height: 52px;
    border-radius: 50%;
    background: #ea9624;
    font-size: 33px;
    font-weight: 700;
    line-height: 52px;
    color: #fff;
  }

  .callout {
    position: absolute;
    top: -9px;
    z-index: 2;
    display: flex;
    align-items: center;
  }

  .from-left {
    left: -124px;
    width: 134px;
  }

  .upper-line .from-left {
    top: -14px;
  }

  .from-right {
    left: 336px;
    width: 323px;
    flex-direction: row-reverse;
  }

  .pointer {
    flex: 1;
    min-width: 0;
    height: 24px;
  }

  .head {
    flex: none;
    margin-left: -6px;
  }

  .from-right .head {
    margin: 0 -6px 0 0;
    transform: scaleX(-1);
  }

  /* legend */
  .legend {
    display: grid;
    grid-template-columns: 582fr 559fr 416fr;
    align-items: start;
    row-gap: 15px;
    padding: 12px 0 0 136px;
  }

  .legend li {
    display: flex;
    align-items: center;
    gap: 17px;
    min-height: 66px;
    font-size: 33px;
    line-height: 38px;
    color: #231f20;
  }

  .legend .dot {
    width: 57px;
    height: 57px;
  }

  .legend-text {
    padding-bottom: 6px;
    white-space: pre-line;
  }
</style>
